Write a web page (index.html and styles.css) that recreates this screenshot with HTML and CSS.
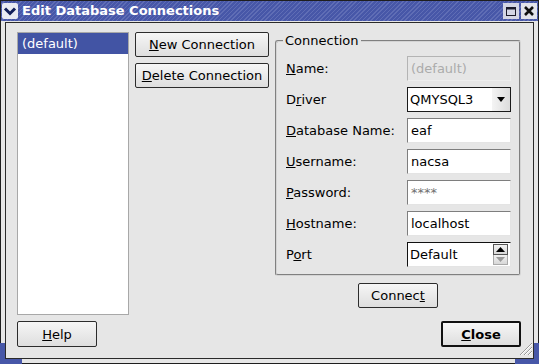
FILE: index.html
```html
<!DOCTYPE html>
<html lang="en">
  <head>
    <meta charset="UTF-8">
    <meta name="viewport" content="width=device-width, initial-scale=1.0">
    <title>Edit Database Connections</title>
    <link rel="stylesheet" href="styles.css">
  </head>
  <body>
    <div class="window">
      <div class="titlebar">
        <span class="tb-menu">
          <svg width="16" height="16" viewBox="0 0 16 16"><path d="M3 5.5 L8 10.5 L13 5.5" fill="none" stroke="#13205a" stroke-width="3"/></svg>
        </span>
        <span class="tb-title">Edit Database Connections</span>
        <span class="tb-btn">
          <svg width="16" height="16" viewBox="0 0 16 16"><rect x="3.5" y="4.5" width="9" height="8" fill="none" stroke="#1a1a2a"/><rect x="3" y="4" width="10" height="2.5" fill="#1a1a2a"/></svg>
        </span>
        <span class="tb-btn">
          <svg width="16" height="16" viewBox="0 0 16 16"><path d="M4 4 L12 12 M12 4 L4 12" stroke="#111" stroke-width="2.6"/></svg>
        </span>
      </div>
      <div class="frame">
        <div class="client">
          <div class="content">
            <div class="conn-list">
              <div class="conn-item selected">(default)</div>
            </div>
            <div class="btn-col">
              <button class="btn"><u>N</u>ew Connection</button>
              <button class="btn"><u>D</u>elete Connection</button>
            </div>
            <div class="group-col">
              <fieldset class="group">
                <legend>Connection</legend>
                <div class="form">
                  <label><u>N</u>ame:</label>
                  <div class="field disabled">(default)</div>
                  <label>D<u>r</u>iver</label>
                  <div class="combo">
                    <span class="combo-text">QMYSQL3</span>
                    <span class="combo-arrow">
                      <svg width="8" height="5" viewBox="0 0 8 5"><path d="M0 0 H8 L4 5 Z" fill="#000"/></svg>
                    </span>
                  </div>
                  <label><u>D</u>atabase Name:</label>
                  <div class="field">eaf</div>
                  <label><u>U</u>sername:</label>
                  <div class="field">nacsa</div>
                  <label><u>P</u>assword:</label>
                  <div class="field password">****</div>
                  <label><u>H</u>ostname:</label>
                  <div class="field">localhost</div>
                  <label>P<u>o</u>rt</label>
                  <div class="spin">
                    <span class="spin-text">Default</span>
                    <span class="spin-btns">
                      <span class="spin-up"><svg width="9" height="5" viewBox="0 0 9 5"><path d="M0 5 H9 L4.5 0 Z" fill="#000"/></svg></span>
                      <span class="spin-down"><svg width="9" height="5" viewBox="0 0 9 5"><path d="M0 0 H9 L4.5 5 Z" fill="#9a9a9a"/></svg></span>
                    </span>
                  </div>
                </div>
              </fieldset>
              <div class="connect-row">
                <button class="btn small">Connec<u>t</u></button>
              </div>
            </div>
          </div>
          <div class="bottom-row">
            <button class="btn small tall"><u>H</u>elp</button>
            <button class="btn small tall default"><u>C</u>lose</button>
          </div>
          <svg class="grip" width="16" height="16" viewBox="0 0 16 16">
            <path d="M15 3 L3 15 M15 7 L7 15 M15 11 L11 15" stroke="#9a9a9a" stroke-width="1"/>
            <path d="M15 4 L4 15 M15 8 L8 15 M15 12 L12 15" stroke="#ffffff" stroke-width="1"/>
          </svg>
        </div>
      </div>
      <div class="corner corner-left"></div>
      <div class="corner corner-right"></div>
    </div>
  </body>
</html>
```

FILE: styles.css
```css
body {
    margin: 0;
    font-family: "DejaVu Sans", "Liberation Sans", sans-serif;
    font-size: 13px;
    color: #000;
    background: #e6e6e6;
}
.window {
    position: relative;
    width: 539px;
    height: 364px;
    box-sizing: border-box;
    border: 1px solid #1e1e1e;
    background: #e6e6e6;
    display: flex;
    flex-direction: column;
}
.titlebar {
    height: 20px;
    display: flex;
    align-items: center;
    background: repeating-linear-gradient(135deg, #4757a8 0 2px, #5f6db5 2px 3px);
}
.tb-menu {
    width: 16px;
    height: 16px;
    margin-left: 1px;
    background: #e9ebf2;
    border-radius: 2px;
    display: flex;
}
.tb-title {
    flex: 1;
    margin-left: 4px;
    color: #fff;
    font-weight: bold;
    font-size: 13px;
    line-height: 20px;
}
.tb-btn {
    width: 16px;
    height: 16px;
    margin-left: 2px;
    background: #d3d6e4;
    display: flex;
}
.tb-btn:last-child {
    margin-right: 1px;
    background: #e2e3ea;
}
.frame {
    flex: 1;
    margin: 1px 4px 4px 4px;
    border: 1px solid #2a2a2a;
    display: flex;
}
.client {
    position: relative;
    flex: 1;
    padding: 9px 12px 11px 11px;
    display: flex;
    flex-direction: column;
    gap: 6px;
}
.content {
    flex: 1;
    display: flex;
    gap: 6px;
}
.conn-list {
    width: 112px;
    box-sizing: border-box;
    background: #fff;
    border: 1px solid #a8a8a8;
}
.conn-item {
    height: 21px;
    line-height: 21px;
    padding-left: 4px;
}
.selected {
    background: #4254a4;
    color: #fff;
}
.btn-col {
    width: 134px;
    display: flex;
    flex-direction: column;
    gap: 6px;
}
.btn {
    font: inherit;
    color: #000;
    height: 25px;
    padding: 0;
    border: 1px solid #2c2c2c;
    border-radius: 2px;
    background: linear-gradient(#f6f6f6, #dedede);
    text-align: center;
    cursor: pointer;
}
.btn u, label u {
    text-underline-offset: 1px;
}
.small {
    width: 80px;
}
.tall {
    height: 26px;
}
.default {
    border: 2px solid #111;
    font-weight: bold;
}
.group-col {
    flex: 1;
    display: flex;
    flex-direction: column;
}
.group {
    margin: 1px 0 0 0;
    padding: 8px 8px 7px 9px;
    border: 2px groove #d4d4d4;
    border-radius: 3px;
}
.group legend {
    padding: 0 2px;
    margin-left: -3px;
    line-height: 15px;
}
.form {
    display: grid;
    grid-template-columns: 1fr 104px;
    grid-auto-rows: 25px;
    row-gap: 6px;
    align-items: center;
}
.field, .combo, .spin {
    height: 25px;
    box-sizing: border-box;
    background: #fff;
    border: 1px solid;
    border-color: #7e7e7e #e4e4e4 #e4e4e4 #7e7e7e;
    padding-left: 3px;
    line-height: 23px;
}
.disabled {
    background: #e6e6e6;
    border-color: #b4b4b4 #eeeeee #eeeeee #b4b4b4;
    color: #ababab;
}
.password {
    color: #707070;
}
.combo {
    display: flex;
    border: 1px solid #1a1a1a;
    padding-left: 2px;
}
.combo-text {
    flex: 1;
}
.combo-arrow {
    width: 18px;
    display: flex;
    align-items: center;
    justify-content: center;
    background: linear-gradient(90deg, #f4f4f4, #dcdcdc);
}
.spin {
    display: flex;
    border-color: #111 #e4e4e4 #e4e4e4 #111;
    padding-left: 2px;
}
.spin-text {
    flex: 1;
}
.spin-btns {
    width: 15px;
    margin: 1px 2px 1px 0;
    display: flex;
    flex-direction: column;
}
.spin-up, .spin-down {
    flex: 1;
    display: flex;
    align-items: center;
    justify-content: center;
    background: linear-gradient(#f2f2f2, #d8d8d8);
    border: 1px solid #555;
}
.spin-down {
    border-color: #aaa;
    border-top: none;
}
.connect-row {
    margin-top: 7px;
    display: flex;
    justify-content: center;
}
.bottom-row {
    display: flex;
    justify-content: space-between;
}
.grip {
    position: absolute;
    right: 0;
    bottom: 2px;
}
.corner {
    position: absolute;
    bottom: -1px;
    width: 22px;
    height: 21px;
    box-sizing: border-box;
    border-bottom: 5px solid #4757a8;
}
.corner-left {
    left: -1px;
    border-left: 5px solid #4757a8;
}
.corner-right {
    right: -1px;
    width: 24px;
    border-right: 5px solid #4757a8;
}
```
